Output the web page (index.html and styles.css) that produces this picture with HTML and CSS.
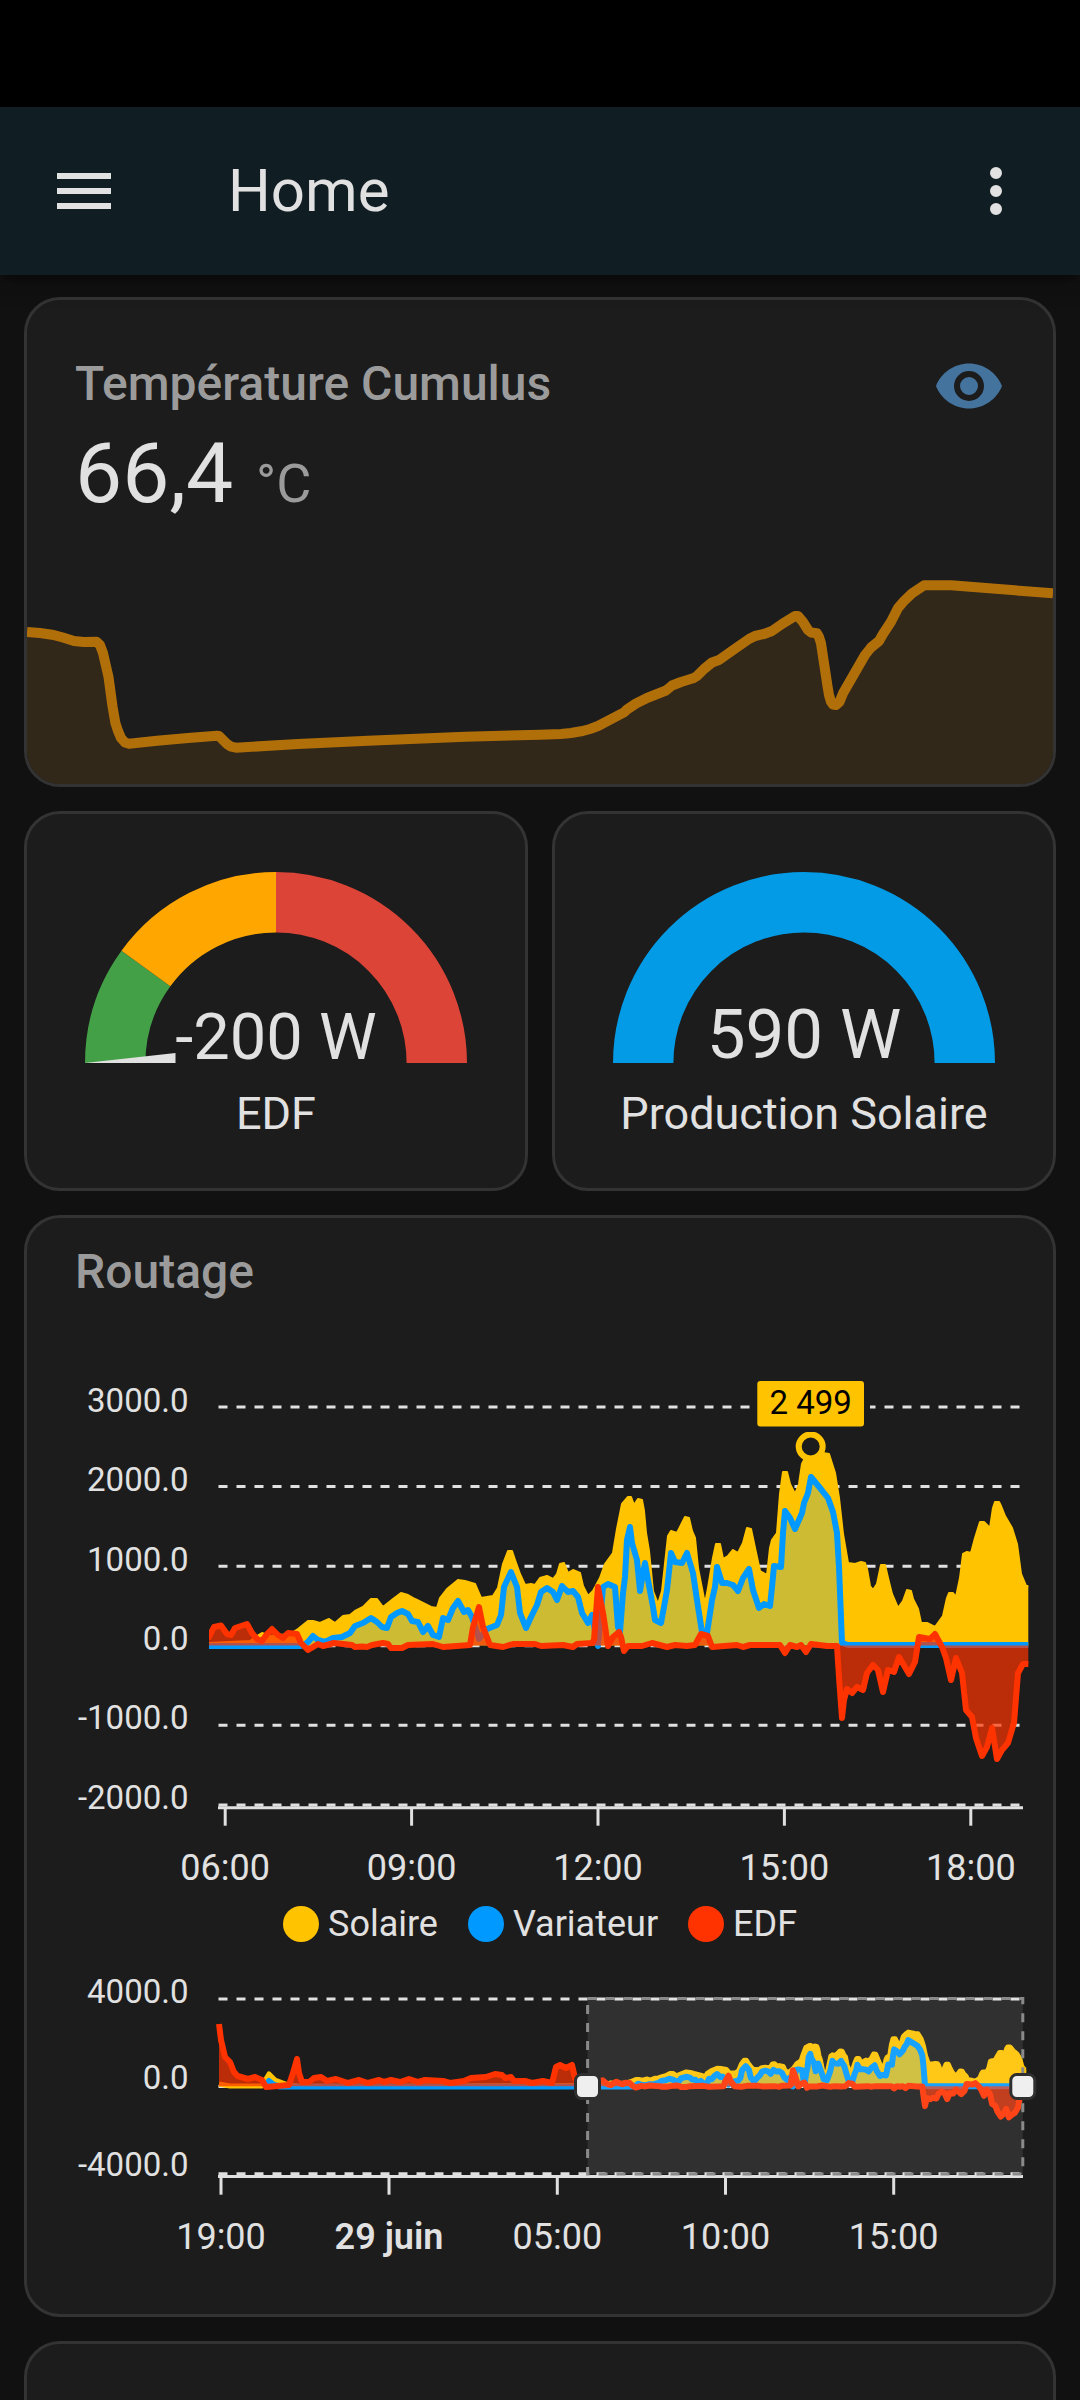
FILE: index.html
```html
<!DOCTYPE html>
<html lang="fr">
<head>
  <meta charset="UTF-8">
  <meta name="viewport" content="width=device-width, initial-scale=1.0">
  <title>Home</title>
  <link rel="stylesheet" href="styles.css">
</head>
<body>

  <div class="status_bar"></div>

  <!-- header -->
  <header class="header">
    <svg class="icon" viewBox="0 0 24 24"><path d="M3,6H21V8H3V6M3,11H21V13H3V11M3,16H21V18H3V16Z"/></svg>
    <h1>Home</h1>
    <svg class="icon" viewBox="0 0 24 24"><path d="M12,16A2,2 0 0,1 14,18A2,2 0 0,1 12,20A2,2 0 0,1 10,18A2,2 0 0,1 12,16M12,10A2,2 0 0,1 14,12A2,2 0 0,1 12,14A2,2 0 0,1 10,12A2,2 0 0,1 12,10M12,4A2,2 0 0,1 14,6A2,2 0 0,1 12,8A2,2 0 0,1 10,6A2,2 0 0,1 12,4Z"/></svg>
  </header>

  <main>
    <!-- sensor -->
    <section class="card sensor">
      <div class="sensor_head">
        <h2>Température Cumulus</h2>
        <svg class="icon eye" viewBox="0 0 24 24"><path d="M12,9A3,3 0 0,0 9,12A3,3 0 0,0 12,15A3,3 0 0,0 15,12A3,3 0 0,0 12,9M12,17A5,5 0 0,1 7,12A5,5 0 0,1 12,7A5,5 0 0,1 17,12A5,5 0 0,1 12,17M12,4.5C7,4.5 2.73,7.61 1,12C2.73,16.39 7,19.5 12,19.5C17,19.5 21.27,16.39 23,12C21.27,7.61 17,4.5 12,4.5Z"/></svg>
      </div>
      <p class="sensor_value">66,4 <span>°C</span></p>
      <svg class="spark" id="spark" viewBox="27 560 1026 224"></svg>
    </section>

    <!-- gauges -->
    <div class="gauges">
      <section class="card gauge">
        <svg viewBox="-201 -201 402 201">
          <path class="arc green" d="M-160.8 0A160.8 160.8 0 0 1 -130.1 -94.5"/>
          <path class="arc orange" d="M-130.1 -94.5A160.8 160.8 0 0 1 0 -160.8"/>
          <path class="arc red" d="M0 -160.8A160.8 160.8 0 0 1 160.8 0"/>
          <path class="needle" d="M-100.5 -10L-191 0H-100.5z"/>
          <text class="edf_value" x="0" y="-4">-200 W</text>
        </svg>
        <p>EDF</p>
      </section>
      <section class="card gauge">
        <svg viewBox="-201 -201 402 201">
          <path class="arc blue" d="M-160.8 0A160.8 160.8 0 0 1 160.8 0"/>
          <text class="solar_value" x="0" y="-5">590 W</text>
        </svg>
        <p>Production Solaire</p>
      </section>
    </div>

    <!-- history charts -->
    <section class="card routage">
      <h2>Routage</h2>
      <svg class="chart" id="chart" viewBox="27 1320 1026 580"></svg>
      <ul class="legend">
        <li class="solaire">Solaire</li>
        <li class="variateur">Variateur</li>
        <li class="edf">EDF</li>
      </ul>
      <svg class="brush" id="brush" viewBox="27 1960 1026 310"></svg>
    </section>

    <section class="card next"></section>
  </main>

  <script src="script.js"></script>
</body>
</html>
```
FILE: styles.css
```css
:root {
  --card: #1c1c1c;
  --border: #333;
  --text: #e1e1e1;
  --text-2: #9b9b9b;
  --solaire: #ffc300;
  --variateur: #0099ff;
  --edf: #ff3300;
}

* {box-sizing: border-box; margin: 0; padding: 0;}
body {width: 1080px; height: 2400px; overflow: hidden; background: #111; color: var(--text); font-family: Roboto, sans-serif;}
svg {display: block;}

.status_bar {height: 107px; background: #000;}
.icon {width: 72px; height: 72px; fill: var(--text); flex: none;}

/* header */
.header {position: relative; display: flex; align-items: center; height: 168px; padding: 0 48px; background: #101e24; box-shadow: 0 6px 12px -3px rgba(0, 0, 0, .5), 0 3px 30px rgba(0, 0, 0, .2);}
.header h1 {flex: 1; margin-left: 108px; padding-bottom: 2px; font-size: 60px; font-weight: 400;}

main {display: flex; flex-direction: column; gap: 24px; padding: 22px 24px 0;}
.card {background: var(--card); border: 3px solid var(--border); border-radius: 36px; overflow: hidden;}
.card h2 {font-size: 48px; font-weight: 500; color: var(--text-2);}

/* sensor */
.sensor {display: flex; flex-direction: column; height: 490px; padding-top: 50px;}
.sensor_head {display: flex; justify-content: space-between; height: 72px; padding: 0 48px;}
.sensor_head h2 {line-height: 67px;}
.eye {fill: #44739e;}
.sensor_value {margin-top: 10px; padding-left: 48px; font-size: 84px; line-height: 84px;}
.sensor_value span {margin-left: 2px; font-size: 54px; line-height: 1; color: var(--text-2);}
.spark {width: 1026px; height: 224px; margin-top: auto;}
.spark_line {fill: none; stroke: #b16f0a; stroke-width: 10; stroke-linejoin: round;}
.spark_area {fill: #32281a;}

/* gauges */
.gauges {display: grid; grid-template-columns: 1fr 1fr; gap: 24px;}
.gauge {height: 380px; padding: 48px; text-align: center;}
.gauge svg {width: 402px; height: 201px; overflow: visible;}
.gauge p {margin: 24px -20px 0; font-size: 45px; line-height: 54px;}
.gauge text {fill: var(--text); text-anchor: middle;}
.edf_value {font-size: 65px;}
.solar_value {font-size: 69px;}
.arc {fill: none; stroke-width: 60.4;}
.green {stroke: #43a047;}
.orange {stroke: #ffa600;}
.red {stroke: #db4437;}
.blue {stroke: #039be5;}
.needle {fill: var(--text);}

/* charts */
.routage {height: 1102px; padding-top: 24px;}
.routage h2 {height: 78px; padding-left: 48px; line-height: 60px;}
.chart {width: 1026px; height: 580px;}
.brush {width: 1026px; height: 310px; margin-top: 12px;}
.routage svg text {fill: var(--text);}
.y_label {font-size: 33px; text-anchor: end;}
.x_label {font-size: 36px; text-anchor: middle;}
.x_label.day {font-weight: 600;}
.grid {stroke: #e0e0e0; stroke-width: 3; stroke-dasharray: 9 9;}
.axis {stroke: #e0e0e0; stroke-width: 3;}
.line {fill: none; stroke-width: 6; stroke-linejoin: round;}
.line.solaire {stroke: var(--solaire); stroke-width: 2;}
.line.variateur {stroke: var(--variateur);}
.line.edf {stroke: var(--edf);}
.brush .line.solaire {stroke-width: 5;}
.area.solaire {fill: var(--solaire);}
.area.variateur {fill: var(--variateur); fill-opacity: .2;}
.area.edf {fill: var(--edf); fill-opacity: .7;}
.point {fill: var(--card); stroke: var(--solaire); stroke-width: 6;}
.tag_gap {fill: var(--card);}
.tag {fill: var(--solaire);}
.routage svg .tag_text {fill: #000; font-size: 33px; text-anchor: middle;}
.selection {fill: rgba(255, 255, 255, .09); stroke: #8a8a8a; stroke-width: 3; stroke-dasharray: 9 9;}
.handle {fill: #efefef; stroke: #2f2f2f; stroke-width: 3;}

.legend {display: flex; gap: 30px; height: 48px; padding-left: 256px; list-style: none; font-size: 36px; line-height: 48px;}
.legend li {display: flex; align-items: center; gap: 9px;}
.legend li::before {content: ""; width: 36px; height: 36px; border-radius: 50%;}
.legend .solaire::before {background: var(--solaire);}
.legend .variateur::before {background: var(--variateur);}
.legend .edf::before {background: var(--edf);}

.next {height: 120px; flex: none;}
```
FILE: script.js
```js
// "x,y x,y ..." -> [[x, y], ...]
const parse = (s) => s.trim().split(/\s+/).map((p) => p.split(',').map(Number));

const line = (pts) => 'M' + pts.map((p) => p.join(' ')).join('L');

const closed = (pts, base) => `${line(pts)}L${pts[pts.length - 1][0]} ${base}L${pts[0][0]} ${base}Z`;

const series = (name, pts, base) =>
  `<path class="area ${name}" d="${closed(pts, base)}"/><path class="line ${name}" d="${line(pts)}"/>`;

const temperature = parse(`27,632 40,633 52,634.7 63,637.5 74,641 84,642 96.4,641.7 100,645 103,653 108.5,677 112.6,707
  115.4,723 118,731 121,738 125,742.5 129,743.7 157,740.7 188,738 217,735.7 219,736 222,739 227,744 231,746.7 236,747.7
  298,744 368,740.7 465,736.7 540,734.7 561,734 571,733 581,731.3 590,729 598,726 624,712.3 627,709.5 636,703.5 647,698
  666,690.5 672,685.5 681,682 693,678.3 697,676 704,669 712,662.5 719,660 736,648 749,639 755,636 764,634 772,631 782,624
  795,616 798,616 803,622 808,630 811,632.5 817,633.3 819,637 821,643.3 827.6,686.7 829,695 831,701.7 833,704.5 836,705
  839.6,701.7 843,693.3 865,655 871,647.5 879,641 883,634 891,621.7 898,608 904,601 912,593.3 924,585.3 951,585.3 1053,593.3`);

const solaire = parse(`208,1643 250,1641 257,1636 262,1633 270,1636 290,1634 298,1629 308,1621 313,1621 320,1623 329,1619 335,1623
  343,1616 350,1615 355,1611 363,1607 371,1599 377,1599 383,1607 393,1599 401,1593 408,1595 415,1599 431,1607 437,1608
  440,1598 447,1589 458,1580 465,1581 475,1584 478,1591 481,1598 493,1596 498,1588 503,1564 508,1551 512,1551 515,1560
  520,1574 525,1585 531,1584 535,1585 540,1578 547,1576 553,1579 557,1574 560,1564 564,1563 568,1573 573,1570 580,1573
  583,1586 588,1596 593,1591 600,1578 605,1564 613,1553 617,1529 622,1504 628,1497 631,1497 634,1505 638,1499 642,1500
  644,1511 646,1533 649,1551 653,1591 658,1604 662,1591 668,1536 671,1531 677,1533 685,1517 689,1518 692,1531 695,1538
  698,1568 705,1604 708,1588 713,1558 716,1544 720,1544 723,1559 728,1556 733,1550 738,1553 743,1543 747,1528 751,1529
  755,1548 760,1571 767,1575 770,1548 772,1540 777,1533 780,1494 783,1472 787,1472 790,1484 795,1494 799,1484 802,1464
  807,1454 811,1448 823,1453 829,1454 835,1473 839,1498 843,1534 848,1563 855,1564 861,1562 865,1563 867,1569 870,1586
  873,1590 877,1584 881,1565 885,1565 888,1578 892,1594 898,1608 903,1601 907,1590 911,1591 913,1599 918,1609 921,1623
  927,1623 935,1627 943,1616 947,1598 949,1593 953,1593 956,1597 960,1578 963,1554 967,1552 971,1553 975,1538 980,1522
  984,1522 990,1528 993,1508 995,1502 999,1502 1001,1506 1005,1516 1012,1528 1017,1544 1021,1574 1026,1586 1029,1586`);

const variateur = parse(`208,1646 300,1646 304,1645 308,1642 313,1636 318,1640 325,1642 333,1638 342,1637 350,1633 355,1626
  363,1623 371,1618 377,1622 382,1627 387,1628 391,1617 397,1613 402,1611 408,1614 412,1621 418,1622 423,1632 428,1626
  433,1635 439,1637 443,1618 448,1620 453,1608 458,1601 464,1612 468,1610 472,1617 479,1639 487,1629 497,1625 501,1615
  504,1587 511,1572 517,1587 520,1613 526,1628 531,1617 537,1605 541,1592 547,1588 553,1592 557,1600 562,1586 568,1592
  573,1591 578,1597 582,1613 588,1623 592,1615 598,1646 603,1587 608,1584 615,1587 618,1627 620,1632 623,1593 625,1577
  627,1540 630,1527 632,1543 637,1560 640,1591 643,1573 645,1563 648,1580 653,1607 655,1620 661,1623 664,1607 667,1590
  671,1553 675,1562 682,1563 687,1553 693,1573 697,1600 702,1632 707,1633 712,1600 715,1587 717,1567 722,1583 727,1583
  733,1585 738,1591 743,1578 749,1569 753,1590 759,1608 764,1604 770,1606 772,1587 774,1566 781,1567 783,1533 785,1511
  790,1518 795,1529 802,1513 804,1503 808,1493 811,1477 820,1488 828,1498 833,1512 837,1533 839,1567 842,1643 848,1645
  1029,1645`);

const edf = parse(`208,1639 214,1627 221,1625.5 227,1634 231,1635 235,1628 247,1624 252,1633 257,1639 262,1641 267,1634
  272,1629 278,1635 283,1638 288,1633 297,1634 301,1643 308,1650 318,1644 323,1646 334,1643 352,1645 355,1647 362,1646.5
  367,1647 372,1645 383,1643 388,1644 391,1648 402,1648 408,1645 433,1644 443,1647 470,1645 473,1627 479,1607 483,1627
  490,1645 503,1647 513,1644 535,1644 541,1646 563,1645 573,1647 577,1644 592,1643 594,1640 598,1587 603,1613 608,1646
  613,1637 619,1632 621,1637 624,1651 628,1646 642,1646 652,1643 667,1647 675,1645 687,1646 695,1645 701,1634 708,1636
  712,1647 737,1645 743,1647 750,1645 780,1645 785,1653 790,1645 797,1647 801,1645 806,1652 811,1644 827,1646 837,1646
  839,1677 842,1718 844,1700 847,1689 852,1693 857,1687 863,1690 867,1673 873,1665 878,1670 883,1692 888,1670 894,1672
  899,1657 909,1674 915,1662 919,1637 930,1639 935,1634 942,1647 946,1658 951,1680 956,1658 962,1673 966,1710 972,1717
  976,1738 982,1756 987,1747 992,1728 997,1759 1002,1750 1008,1743 1014,1723 1018,1673 1023,1664 1029,1664`);

// the night before, only visible in the brush chart
const solaireNight = parse('219,2084 230,2086 262,2086 266,2079 269,2074 275,2080 283,2083 289,2085 300,2086.5');
const variateurNight = parse('264,2086 269,2081 274,2085 280,2086.5');
const edfNight = parse(`219,2024 221,2040 225,2057 230,2062 234,2072 237.5,2076 248,2079 255,2077 262,2080 266,2087 289,2085
  293,2073 297,2059 299,2073 302,2082 309,2082 314,2078 321,2077 327,2081 336,2079 348,2083 359,2080 368,2083 379,2080
  384,2082 391,2080 400,2082 409,2079 418,2082 425,2080 443,2081 450,2083 464,2081 471,2078 486,2077 495,2074 502,2075
  505,2078 511,2077 514,2081 525,2081 532,2083 543,2081 552,2083 556,2067 560,2065 566,2068 572,2065 575,2078 578,2083`);

const toBrush = (pts) => pts.map(([x, y]) => [591 + (x - 225) * 0.5413, 2086.3 + (y - 1645.6) * 0.2742]);

// temperature
document.getElementById('spark').innerHTML =
  `<path class="spark_area" d="${closed(temperature, 784)}"/><path class="spark_line" d="${line(temperature)}"/>`;

function axes(rows, cols, axisY, tickEnd, labelY) {
  let out = '';
  rows.forEach(([label, y, textY]) => {
    out += `<path class="grid" d="M218.5 ${y}H1023"/><text class="y_label" x="188.5" y="${textY}">${label}</text>`;
  });
  out += `<path class="axis" d="M218 ${axisY}H1023"/>`;
  cols.forEach(([label, x, cls]) => {
    out += `<path class="axis" d="M${x} ${axisY}V${tickEnd}"/><text class="x_label ${cls || ''}" x="${x}" y="${labelY}">${label}</text>`;
  });
  return out;
}

// main chart
document.getElementById('chart').innerHTML = `
  <clipPath id="clipMain"><rect x="209" y="1380" width="819.3" height="440"/></clipPath>
  ${axes(
    [['3000.0', 1407, 1411.5], ['2000.0', 1486.6, 1491], ['1000.0', 1566.2, 1570.7], ['0.0', 1645.8, 1649.5],
      ['-1000.0', 1725.3, 1729.3], ['-2000.0', 1804.9, 1808.7]],
    [['06:00', 225.2], ['09:00', 411.6], ['12:00', 598], ['15:00', 784.4], ['18:00', 970.8]],
    1807.8, 1825.7, 1879.7)}
  <g clip-path="url(#clipMain)">
    ${series('solaire', solaire, 1645.6)}
    ${series('variateur', variateur, 1645.6)}
    ${series('edf', edf, 1645.6)}
  </g>
  <circle class="point" cx="810.7" cy="1446.5" r="12"/>
  <rect class="tag_gap" x="751" y="1375" width="119" height="57"/>
  <rect class="tag" x="757.3" y="1381" width="106.7" height="45.5" rx="3"/>
  <text class="tag_text" x="810.7" y="1413.8">2 499</text>`;

// brush chart
document.getElementById('brush').innerHTML = `
  <clipPath id="clipBrush"><rect x="215" y="1990" width="812" height="190"/></clipPath>
  ${axes(
    [['4000.0', 1999, 2002.7], ['0.0', 2086.4, 2089], ['-4000.0', 2173.8, 2176.3]],
    [['19:00', 221], ['29 juin', 389, 'day'], ['05:00', 557.3], ['10:00', 725.5], ['15:00', 893.7]],
    2176.5, 2194.7, 2249)}
  <g clip-path="url(#clipBrush)">
    ${series('solaire', solaireNight.concat(toBrush(solaire)), 2086.3)}
    ${series('variateur', variateurNight.concat(toBrush(variateur)), 2086.3)}
    ${series('edf', edfNight.concat(toBrush(edf)), 2086.3)}
  </g>
  <rect class="selection" x="587.6" y="1998.5" width="435.2" height="175.5"/>
  <rect class="handle" x="575.5" y="2074.5" width="24" height="24" rx="6"/>
  <rect class="handle" x="1010.8" y="2074.5" width="24" height="24" rx="6"/>`;
```
